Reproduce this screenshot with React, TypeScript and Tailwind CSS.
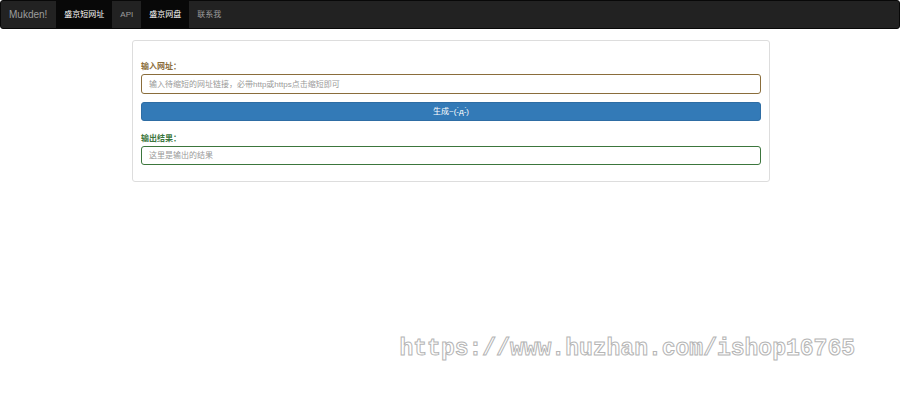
const navItems = [
  { title: "盛京短网址", path: "#home", active: true },
  { title: "API", path: "#api", active: false },
  { title: "盛京网盘", path: "#pan", active: true },
  { title: "联系我", path: "#contact", active: false },
];

const Navbar = () => {
  return (
    <nav className="flex h-[29px] items-stretch rounded-[3px] border border-[#080808] bg-[#222222]">
      <a href="#top" className="flex items-center pr-[9px] pl-2 text-[10px] text-[#9d9d9d]">
        Mukden!
      </a>
      {navItems.map((item) => {
        return (
          <a
            href={item.path}
            key={item.path}
            className={
              item.active
                ? "flex items-center bg-[#080808] px-2 text-white"
                : "flex items-center px-2 text-[#9d9d9d]"
            }
          >
            {item.title}
          </a>
        );
      })}
    </nav>
  );
};

const ShortenPanel = () => {
  return (
    <form className="rounded-[3px] border border-[#dddddd] px-2 pt-5 pb-4">
      <label htmlFor="url" className="block h-[13px] font-bold leading-[11px] text-[#8a6d3b]">
        输入网址：
      </label>
      <input
        id="url"
        type="text"
        placeholder="输入待缩短的网址链接，必带http或https点击缩短即可"
        className="block h-5 w-full rounded-[3px] border border-[#8a6d3b] px-[7px] placeholder:text-[#999999]"
      />
      <button
        type="button"
        className="mt-2 block h-[19px] w-full rounded-[3px] border border-[#2e6da4] bg-[#337ab7] text-white"
      >
        生成~(-̀д-́)
      </button>
      <label htmlFor="result" className="mt-3 block h-[13px] font-bold leading-[11px] text-[#3c763d]">
        输出结果：
      </label>
      <input
        id="result"
        type="text"
        placeholder="这里是输出的结果"
        className="block h-[19px] w-full rounded-[3px] border border-[#3c763d] px-[7px] placeholder:text-[#999999]"
      />
    </form>
  );
};

const App = () => {
  return (
    <div className="relative min-h-screen bg-white font-['Liberation_Sans','Noto_Sans_CJK_SC',sans-serif] text-[8px] leading-[11px]">
      <Navbar />
      <main className="mx-auto mt-[11px] w-full max-w-[640px] pl-0.5">
        <ShortenPanel />
      </main>
      <p className="absolute right-[45px] bottom-[42px] whitespace-nowrap font-['Liberation_Mono',monospace] text-[23px] font-bold leading-[28px] text-white [-webkit-text-stroke:1px_#b5b5b5]">
        https://www.huzhan.com/ishop16765
      </p>
    </div>
  );
};

export default App;
